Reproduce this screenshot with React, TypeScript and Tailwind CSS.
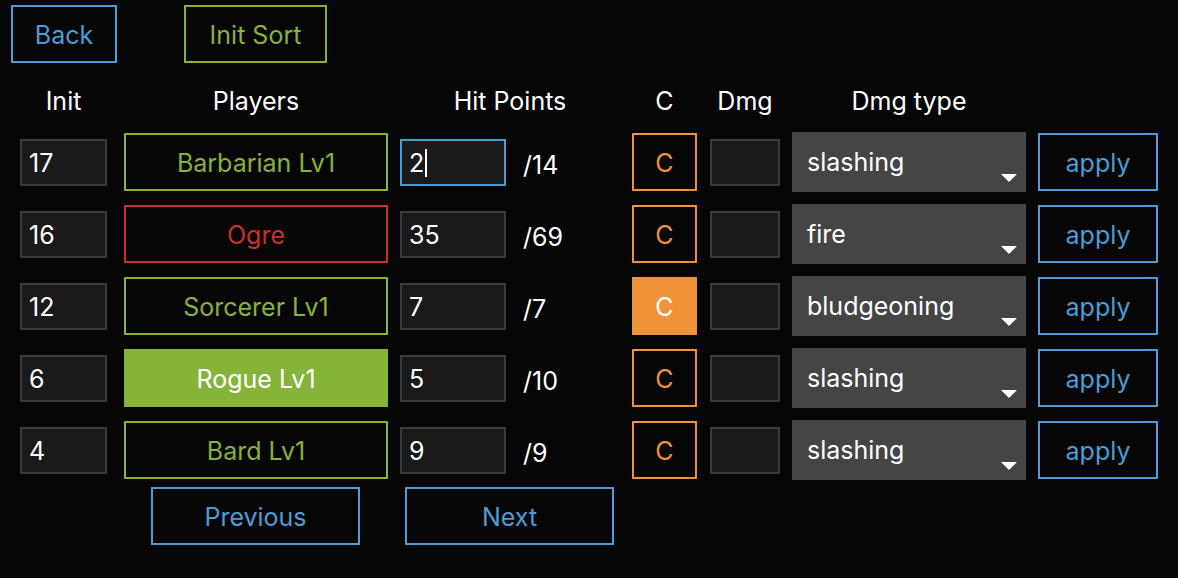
import React from 'react';

type Row = {
  init: string;
  name: string;
  kind: 'player' | 'enemy' | 'active';
  hp: string;
  maxHp: string;
  conc: boolean;
  dmgType: string;
  focused?: boolean;
};

const rows: Row[] = [
  { init: '17', name: 'Barbarian Lv1', kind: 'player', hp: '2', maxHp: '/14', conc: false, dmgType: 'slashing', focused: true },
  { init: '16', name: 'Ogre', kind: 'enemy', hp: '35', maxHp: '/69', conc: false, dmgType: 'fire' },
  { init: '12', name: 'Sorcerer Lv1', kind: 'player', hp: '7', maxHp: '/7', conc: true, dmgType: 'bludgeoning' },
  { init: '6', name: 'Rogue Lv1', kind: 'active', hp: '5', maxHp: '/10', conc: false, dmgType: 'slashing' },
  { init: '4', name: 'Bard Lv1', kind: 'player', hp: '9', maxHp: '/9', conc: false, dmgType: 'slashing' },
];

function NameButton({ row }: { row: Row }) {
  if (row.kind === 'active') {
    return (
      <button className="ml-[17px] flex h-[58px] w-[264px] items-center justify-center bg-[#86b33a] pt-[2px] text-white">
        {row.name}
      </button>
    );
  }
  const cls =
    row.kind === 'enemy'
      ? 'border-[#c9322a] text-[#c9322a]'
      : 'border-[#86b33a] text-[#86b33a]';
  return (
    <button className={`ml-[17px] flex h-[58px] w-[264px] items-center justify-center border-2 pt-[2px] ${cls}`}>
      {row.name}
    </button>
  );
}

function Field({ value, width, focused }: { value: string; width: string; focused?: boolean }) {
  return (
    <div
      className={`flex h-[47px] items-center border-2 bg-[#1a1a1a] pl-[7px] pt-[2px] text-white ${width} ${
        focused ? 'border-[#4c9dd6]' : 'border-[#3a3a3a]'
      }`}
    >
      {value}
      {focused && <span className="ml-[1px] inline-block h-[28px] w-[2px] bg-white" />}
    </div>
  );
}

function Arrow() {
  return (
    <svg width="16" height="8" viewBox="0 0 16 8" className="absolute bottom-[10px] right-[9px]">
      <path d="M0 0 H16 L8 8 Z" fill="#ffffff" />
    </svg>
  );
}

function TableRow({ row }: { row: Row }) {
  return (
    <div className="flex h-[60px] items-center">
      <div className="ml-[20px]">
        <Field value={row.init} width="w-[87px]" />
      </div>
      <NameButton row={row} />
      <div className="ml-[12px]">
        <Field value={row.hp} width="w-[106px]" focused={row.focused} />
      </div>
      <div className="ml-[17px] w-[97px] pt-[6px] text-white">{row.maxHp}</div>
      <button
        className={`ml-[12px] flex h-[58px] w-[65px] items-center justify-center pt-[2px] ${
          row.conc ? 'bg-[#f0923a] text-white' : 'border-2 border-[#f0923a] text-[#f0923a]'
        }`}
      >
        C
      </button>
      <div className="ml-[13px]">
        <Field value="" width="w-[70px]" />
      </div>
      <div className="relative ml-[12px] flex h-[60px] w-[234px] items-center bg-[#454545] pl-[15px] text-white">
        {row.dmgType}
        <Arrow />
      </div>
      <button className="ml-[12px] flex h-[58px] w-[120px] items-center justify-center border-2 border-[#4c9dd6] pt-[2px] text-[#4c9dd6]">
        apply
      </button>
    </div>
  );
}

export default function App() {
  return (
    <div
      className="h-[578px] w-[1178px] overflow-hidden bg-[#060606] text-[25px] leading-none"
      style={{ fontFamily: 'Inter, "Noto Sans", sans-serif' }}
    >
      <div className="flex pt-[5px]">
        <button className="ml-[11px] flex h-[58px] w-[106px] items-center justify-center border-2 border-[#4c9dd6] pt-[2px] text-[#4c9dd6]">
          Back
        </button>
        <button className="ml-[67px] flex h-[58px] w-[143px] items-center justify-center border-2 border-[#86b33a] pt-[2px] text-[#86b33a]">
          Init Sort
        </button>
      </div>

      <div className="mt-[25px] flex h-[26px] items-center text-white">
        <div className="ml-[20px] w-[87px] text-center">Init</div>
        <div className="ml-[17px] w-[264px] text-center">Players</div>
        <div className="ml-[12px] w-[220px] text-center">Hit Points</div>
        <div className="ml-[12px] w-[65px] text-center">C</div>
        <div className="ml-[13px] w-[70px] text-center">Dmg</div>
        <div className="ml-[12px] w-[234px] text-center">Dmg type</div>
      </div>

      <div className="mt-[18px] flex flex-col gap-[12px]">
        {rows.map((r) => (
          <TableRow key={r.name} row={r} />
        ))}
      </div>

      <div className="mt-[7px] flex">
        <button className="ml-[151px] flex h-[58px] w-[209px] items-center justify-center border-2 border-[#4c9dd6] pt-[2px] text-[#4c9dd6]">
          Previous
        </button>
        <button className="ml-[45px] flex h-[58px] w-[209px] items-center justify-center border-2 border-[#4c9dd6] pt-[2px] text-[#4c9dd6]">
          Next
        </button>
      </div>
    </div>
  );
}
